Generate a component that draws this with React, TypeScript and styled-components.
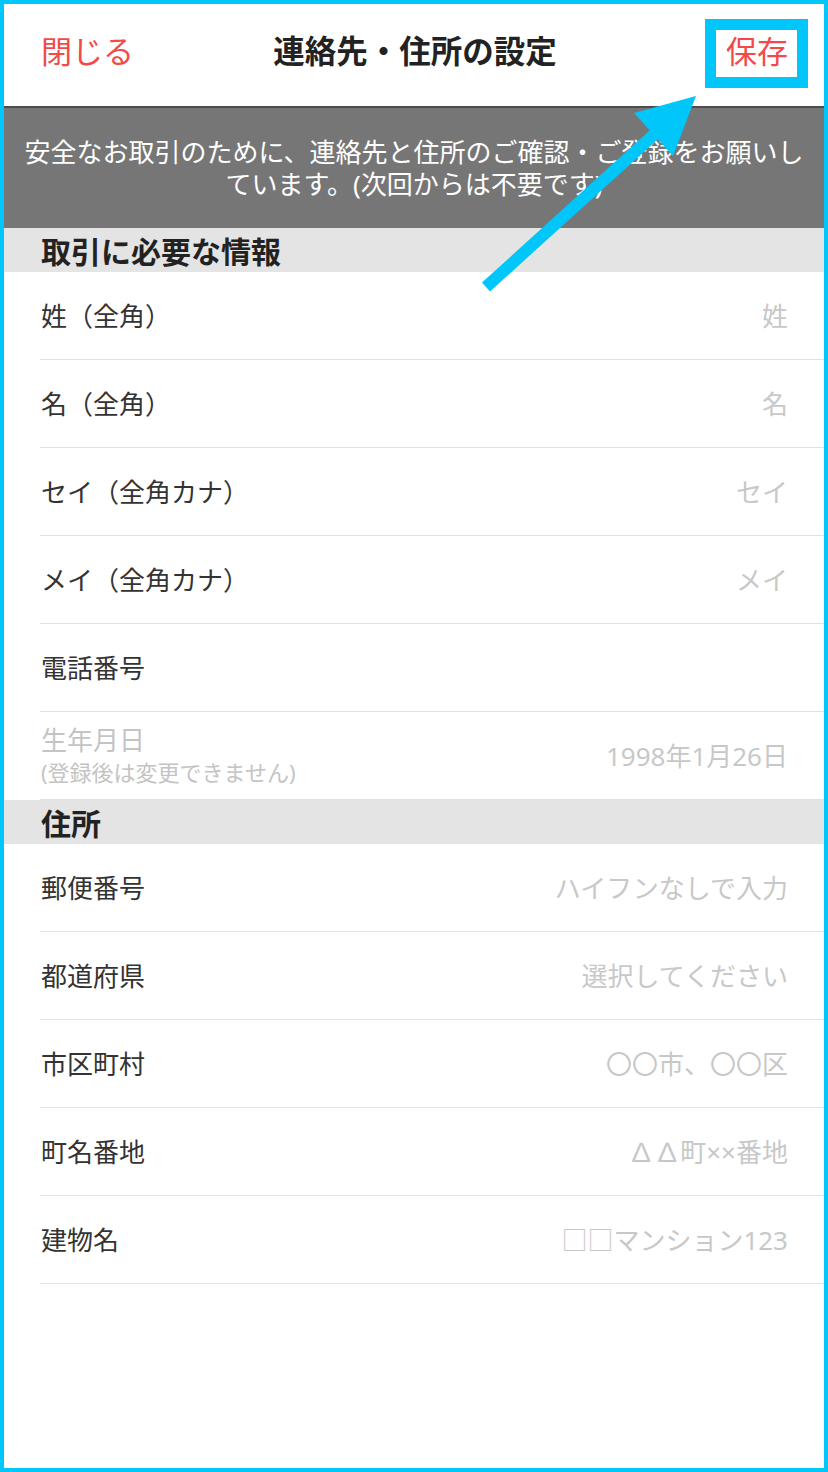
import React from "react";
import styled, { createGlobalStyle } from "styled-components";

const GlobalStyle = createGlobalStyle`
  html, body {
    margin: 0;
    padding: 0;
    background: #ffffff;
  }
  body {
    font-family: "Noto Sans", "Noto Sans CJK JP", sans-serif;
    color: #333333;
  }
`;

const CYAN = "#00c6fa";

type Field = {
  label: string;
  placeholder?: string;
};

const dealFields: Field[] = [
  { label: "姓（全角）", placeholder: "姓" },
  { label: "名（全角）", placeholder: "名" },
  { label: "セイ（全角カナ）", placeholder: "セイ" },
  { label: "メイ（全角カナ）", placeholder: "メイ" },
  { label: "電話番号" },
];

const addressFields: Field[] = [
  { label: "郵便番号", placeholder: "ハイフンなしで入力" },
  { label: "都道府県", placeholder: "選択してください" },
  { label: "市区町村", placeholder: "〇〇市、〇〇区" },
  { label: "町名番地", placeholder: "∆∆町××番地" },
  { label: "建物名", placeholder: "□□マンション123" },
];

const Frame = styled.div`
  position: relative;
  box-sizing: border-box;
  width: 828px;
  height: 1472px;
  border: 4px solid ${CYAN};
  background: #ffffff;
  overflow: hidden;
`;

const Header = styled.header`
  box-sizing: border-box;
  height: 104px;
  padding: 0 36px 8px 37px;
  display: flex;
  align-items: center;
  justify-content: space-between;
  border-bottom: 2px solid #4d4d4d;
`;

const HeaderButton = styled.span<{ $align: "left" | "right" }>`
  font-size: 31px;
  line-height: 36px;
  color: #f24a4a;
  min-width: 92px;
  text-align: ${(p) => p.$align};
`;

const Title = styled.h1`
  margin: 0;
  font-size: 31.5px;
  line-height: 36px;
  font-weight: 700;
  color: #222222;
`;

const Banner = styled.div`
  box-sizing: border-box;
  height: 120px;
  padding: 0 18px;
  display: flex;
  align-items: center;
  justify-content: center;
  background: #767676;
  color: #ffffff;
  font-size: 26px;
  line-height: 32px;
  text-align: center;
`;

const SectionHeader = styled.h2`
  box-sizing: border-box;
  margin: 0;
  height: 44px;
  padding-left: 37px;
  display: flex;
  align-items: center;
  background: #e4e4e4;
  font-size: 30px;
  font-weight: 700;
  color: #222222;
`;

const Row = styled.div`
  padding-left: 36px;
`;

const RowInner = styled.div`
  box-sizing: border-box;
  height: 88px;
  padding: 0 36px 0 1px;
  display: flex;
  align-items: center;
  justify-content: space-between;
  border-bottom: 1px solid #e2e2e2;
`;

const Label = styled.div<{ $muted?: boolean }>`
  font-size: 26px;
  line-height: 32px;
  color: ${(p) => (p.$muted ? "#c4c4c4" : "#333333")};
`;

const SubLabel = styled.div`
  font-size: 22px;
  line-height: 32px;
  color: #c4c4c4;
`;

const Placeholder = styled.div`
  font-size: 26px;
  line-height: 32px;
  color: #c8c8c8;
  text-align: right;
`;

const Annotation = styled.svg`
  position: absolute;
  left: -4px;
  top: -4px;
  width: 828px;
  height: 1472px;
  pointer-events: none;
`;

function FieldRow({ label, placeholder }: Field) {
  return (
    <Row>
      <RowInner>
        <Label>{label}</Label>
        {placeholder && <Placeholder>{placeholder}</Placeholder>}
      </RowInner>
    </Row>
  );
}

export default function App() {
  return (
    <>
      <GlobalStyle />
      <Frame>
        <Header>
          <HeaderButton $align="left">閉じる</HeaderButton>
          <Title>連絡先・住所の設定</Title>
          <HeaderButton $align="right">保存</HeaderButton>
        </Header>
        <Banner>
          安全なお取引のために、連絡先と住所のご確認・ご登録をお願いしています。(次回からは不要です)
        </Banner>

        <SectionHeader>取引に必要な情報</SectionHeader>
        {dealFields.map((f) => (
          <FieldRow key={f.label} {...f} />
        ))}
        <Row>
          <RowInner>
            <div>
              <Label $muted>生年月日</Label>
              <SubLabel>(登録後は変更できません)</SubLabel>
            </div>
            <Placeholder>1998年1月26日</Placeholder>
          </RowInner>
        </Row>

        <SectionHeader>住所</SectionHeader>
        {addressFields.map((f) => (
          <FieldRow key={f.label} {...f} />
        ))}

        {/* screenshot markup: box round the save button and the arrow */}
        <Annotation viewBox="0 0 828 1472">
          <rect
            x={710.5}
            y={24.5}
            width={92}
            height={58}
            fill="none"
            stroke={CYAN}
            strokeWidth={11}
          />
          <line
            x1={486}
            y1={287}
            x2={658}
            y2={131}
            stroke={CYAN}
            strokeWidth={12}
          />
          <polygon points="696,96 634,113 673,156" fill={CYAN} />
        </Annotation>
      </Frame>
    </>
  );
}
